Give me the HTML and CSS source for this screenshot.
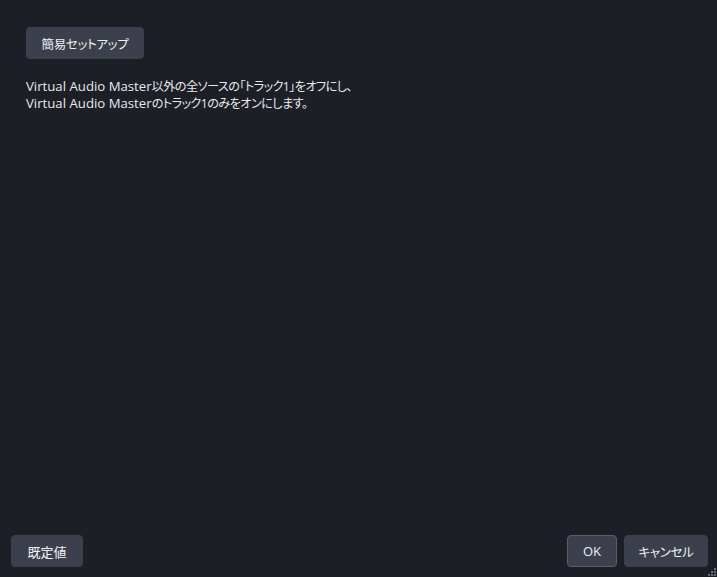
FILE: index.html
```html
<!DOCTYPE html>
<html lang="ja">
<head>
<meta charset="utf-8">
<link rel="stylesheet" href="styles.css">
</head>
<body>
<div class="dialog">
  <div class="content">
    <button class="btn setup">簡易セットアップ</button>
    <div class="desc">
      <div class="line"><span class="en">Virtual Audio Master</span>以外の全ソースの「トラック1」をオフにし、</div>
      <div class="line"><span class="en">Virtual Audio Master</span>のトラック1のみをオンにします。</div>
    </div>
  </div>
  <div class="footer">
    <button class="btn defaults">既定値</button>
    <div class="spacer"></div>
    <button class="btn ok">OK</button>
    <button class="btn cancel">キャンセル</button>
  </div>
  <div class="grip">
    <span></span><span></span><span></span><span></span><span></span><span></span>
  </div>
</div>
</body>
</html>
```
FILE: styles.css
```css
html, body {
  margin: 0;
  padding: 0;
  background: #1d1f27;
}
.dialog {
  position: relative;
  width: 717px;
  height: 577px;
  display: flex;
  flex-direction: column;
  font-family: "Open Sans", "Noto Sans CJK JP", sans-serif;
  font-feature-settings: "palt";
  color: #e8e8ea;
  box-sizing: border-box;
}
.content {
  flex: 1;
  padding: 27px 26px 0;
  display: flex;
  flex-direction: column;
  align-items: flex-start;
}
.btn {
  font-family: "Open Sans", "Noto Sans CJK JP", sans-serif;
  font-feature-settings: "palt";
  font-size: 12.5px;
  letter-spacing: -0.3px;
  color: #f0f0f2;
  background: #3c404c;
  border: 1px solid #3c404c;
  border-radius: 4px;
  height: 32px;
  padding: 0;
  box-sizing: border-box;
  display: flex;
  align-items: center;
  justify-content: center;
}
.setup { width: 118px; }
.desc {
  margin-top: 19px;
  font-size: 12.2px;
  letter-spacing: -0.6px;
}
.line {
  height: 17px;
  line-height: 17px;
  white-space: nowrap;
}
.en {
  font-size: 13.2px;
  letter-spacing: 0;
}
.footer {
  display: flex;
  align-items: center;
  padding: 0 9px 10px 11px;
  gap: 7px;
}
.spacer { flex: 1; }
.defaults { width: 72px; letter-spacing: 0; font-size: 13px; }
.ok { width: 50px; border-color: #5b5f6b; letter-spacing: 0; font-size: 13px; }
.cancel { width: 84px; }
.grip {
  position: absolute;
  right: 1px;
  bottom: 1px;
  width: 8px;
  height: 8px;
}
.grip span {
  position: absolute;
  width: 2px;
  height: 2px;
  background: #6a6e7a;
}
.grip span:nth-child(1) { right: 0; bottom: 0; }
.grip span:nth-child(2) { right: 3px; bottom: 0; }
.grip span:nth-child(3) { right: 6px; bottom: 0; }
.grip span:nth-child(4) { right: 0; bottom: 3px; }
.grip span:nth-child(5) { right: 3px; bottom: 3px; }
.grip span:nth-child(6) { right: 0; bottom: 6px; }
```
